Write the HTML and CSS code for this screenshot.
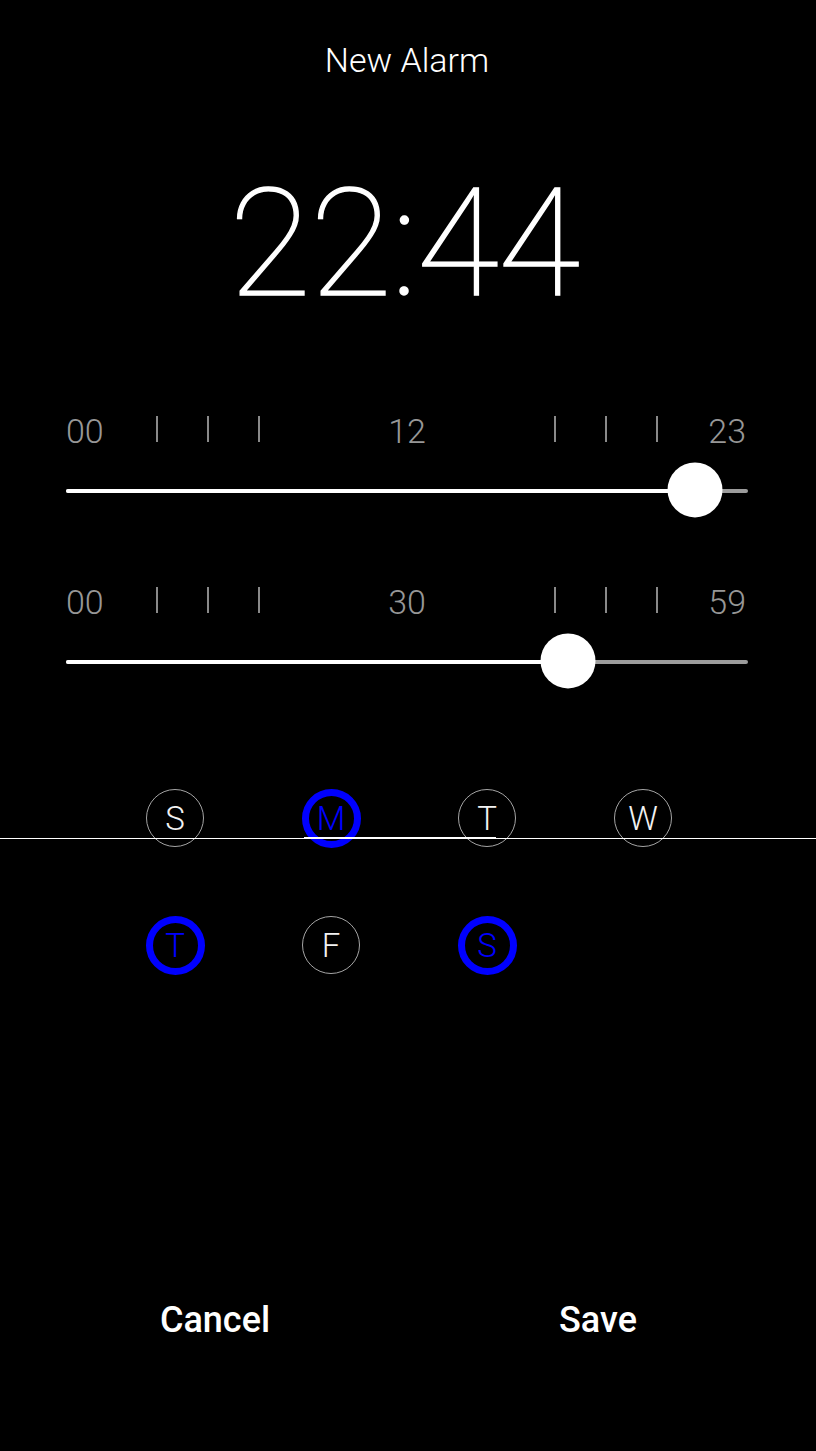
FILE: index.html
```html
<!DOCTYPE html>
<html lang="en">
<head>
<meta charset="utf-8">
<title>New Alarm</title>
<link rel="stylesheet" href="styles.css">
</head>
<body>
<main class="screen">
  <h1 class="title">New Alarm</h1>
  <div class="time">22:44</div>

  <section class="slider slider-hours">
    <div class="scale">
      <span class="num">00</span>
      <span class="ticks ticks-left"><i></i><i></i><i></i></span>
      <span class="spacer"></span>
      <span class="num">12</span>
      <span class="spacer"></span>
      <span class="ticks ticks-right"><i></i><i></i><i></i></span>
      <span class="num num-end">23</span>
    </div>
    <div class="track-box">
      <div class="track">
        <div class="fill" style="width: 92.2%"></div>
        <div class="thumb" style="left: 92.2%"></div>
      </div>
    </div>
  </section>

  <section class="slider slider-minutes">
    <div class="scale">
      <span class="num">00</span>
      <span class="ticks ticks-left"><i></i><i></i><i></i></span>
      <span class="spacer"></span>
      <span class="num">30</span>
      <span class="spacer"></span>
      <span class="ticks ticks-right"><i></i><i></i><i></i></span>
      <span class="num num-end">59</span>
    </div>
    <div class="track-box">
      <div class="track">
        <div class="fill" style="width: 73.6%"></div>
        <div class="thumb" style="left: 73.6%"></div>
      </div>
    </div>
  </section>

  <div class="days">
    <span class="day">S</span>
    <span class="day on">M</span>
    <span class="day">T</span>
    <span class="day">W</span>
    <span class="day on">T</span>
    <span class="day">F</span>
    <span class="day on">S</span>
  </div>

  <div class="rule"></div>
  <div class="rule-seg"></div>

  <div class="actions">
    <button class="btn">Cancel</button>
    <button class="btn">Save</button>
  </div>
</main>
</body>
</html>
```

FILE: styles.css
```css
html, body {
  margin: 0;
  padding: 0;
  background: #000;
}

.screen {
  position: relative;
  width: 816px;
  height: 1451px;
  display: flex;
  flex-direction: column;
  color: #fff;
  font-family: Roboto, "Liberation Sans", sans-serif;
  overflow: hidden;
}

.title {
  margin: 40px 0 0;
  font-size: 34px;
  line-height: 40px;
  font-weight: 300;
  text-align: center;
  padding-right: 2px;
}

.time {
  margin-top: 89px;
  font-size: 150px;
  line-height: 150px;
  font-weight: 100;
  text-align: center;
  letter-spacing: -1px;
  padding-right: 8px;
  -webkit-text-stroke: 1.3px #fff;
}

.slider {
  margin: 92px 68px 0 66px;
}

.slider-minutes {
  margin-top: 64px;
}

.scale {
  display: flex;
  align-items: flex-start;
  height: 40px;
  font-size: 34px;
  line-height: 40px;
  font-weight: 300;
  color: #979797;
}

.num-end {
  margin-right: 2px;
}

.spacer {
  flex: 1;
}

.ticks {
  display: flex;
  gap: 49px;
  margin-top: 5px;
}

.ticks i {
  display: block;
  width: 2px;
  height: 26px;
  background: #8a8a8a;
}

.ticks-left {
  margin-left: 52px;
}

.ticks-right {
  margin-right: 50px;
}

.track-box {
  margin-top: 11px;
  height: 56px;
  display: flex;
  align-items: center;
}

.track {
  position: relative;
  width: 100%;
  height: 4px;
  border-radius: 2px;
  background: #9c9c9c;
  margin-top: 2px;
}

.fill {
  height: 100%;
  border-radius: 2px;
  background: #fff;
}

.thumb {
  position: absolute;
  top: 50%;
  width: 55px;
  height: 55px;
  border-radius: 50%;
  background: #fff;
  transform: translate(-50%, -52%);
}

.days {
  margin: 100px auto 0;
  width: 624px;
  padding-left: 2px;
  display: grid;
  grid-template-columns: repeat(4, 156px);
  row-gap: 68px;
  justify-items: center;
}

.day {
  box-sizing: border-box;
  width: 58px;
  height: 58px;
  border: 1px solid #a5a5a5;
  border-radius: 50%;
  display: flex;
  align-items: center;
  justify-content: center;
  font-size: 33px;
  font-weight: 300;
  color: #f2f2f2;
}

.day.on {
  width: 59px;
  height: 59px;
  border: 7px solid #0000ff;
  color: #0000ff;
}

.rule {
  position: absolute;
  left: 0;
  right: 0;
  top: 838px;
  height: 1px;
  background: #fff;
}

.rule-seg {
  position: absolute;
  left: 304px;
  width: 192px;
  top: 837px;
  height: 1px;
  background: #fff;
}

.actions {
  margin-top: 324px;
  padding: 0 22px;
  display: grid;
  grid-template-columns: 1fr 1fr;
}

.btn {
  background: none;
  border: 0;
  padding: 0;
  color: #fff;
  font-family: Roboto, "Liberation Sans", sans-serif;
  font-size: 36px;
  line-height: 42px;
  font-weight: 500;
  text-align: center;
}

.btn:last-child {
  padding-right: 6px;
}
```
